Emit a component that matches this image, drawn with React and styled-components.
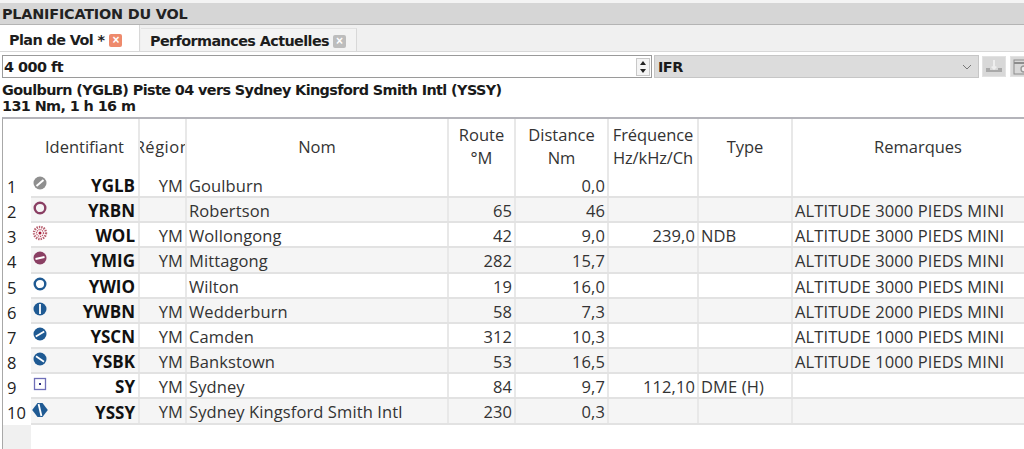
import React from 'react'
import styled, { createGlobalStyle } from 'styled-components'

const GlobalStyle = createGlobalStyle`
  html, body { margin: 0; padding: 0; background: #fff; overflow: hidden; }
  body { font-family: "Open Sans", "Noto Sans", sans-serif; color: #1a1a1a; }
`

const COLUMNS = '109px 47px 262px 67px 93px 90px 94px 252px'
const BLUE = '#1f5a93'
const PLUM = '#8a3f63'

const Page = styled.div`
  width: 1024px;
  height: 449px;
  overflow: hidden;
  display: flex;
  flex-direction: column;
  padding-top: 3px;
  box-sizing: border-box;
  background: #f4f4f4;
`
const TitleBar = styled.div`
  height: 20px;
  flex: none;
  box-sizing: content-box;
  background: #d6d6d6;
  border-bottom: 1px solid #b4b4b4;
  padding: 1px 0 0 2px;
  display: flex;
  align-items: center;
  font: bold 14.4px "DejaVu Sans", sans-serif;
  letter-spacing: -0.2px;
  color: #222;
  white-space: nowrap;
`
const TabBar = styled.div`
  height: 27px;
  flex: none;
  box-sizing: border-box;
  background: #f0f0f0;
  border-bottom: 1px solid #d8d8d8;
  display: flex;
  align-items: flex-end;
`
const Tab = styled.div`
  height: ${p => (p.$active ? '26px' : '23px')};
  box-sizing: border-box;
  background: ${p => (p.$active ? '#fff' : '#f3f3f3')};
  border-right: 1px solid #d8d8d8;
  border-top: ${p => (p.$active ? '0' : '1px solid #e2e2e2')};
  width: ${p => p.$width}px;
  margin-right: ${p => p.$gap || 0}px;
  padding-left: ${p => p.$pad}px;
  padding-top: ${p => (p.$active ? 4 : 2)}px;
  display: flex;
  align-items: center;
  gap: ${p => (p.$active ? 5 : 4)}px;
  font: bold 14.4px "DejaVu Sans", sans-serif;
  letter-spacing: -0.6px;
  color: #1d1d1d;
  white-space: nowrap;
`
const CloseBox = styled.span`
  width: 13px;
  height: 13px;
  border-radius: 2px;
  background: ${p => (p.$active ? '#ee8a6c' : '#bdbdbd')};
  color: #fff;
  font: bold 12px/13px "Liberation Sans", sans-serif;
  text-align: center;
  letter-spacing: 0;
`
const Body = styled.div`
  flex: 1;
  min-height: 0;
  display: flex;
  flex-direction: column;
  background: #fff;
`
const InputRow = styled.div`
  height: 23px;
  flex: none;
  margin-top: 3px;
  display: flex;
  align-items: stretch;
  padding-left: 2px;
`
const AltitudeBox = styled.div`
  width: 650px;
  flex: none;
  box-sizing: border-box;
  border: 1px solid #9a9a9a;
  background: #fff;
  display: flex;
  align-items: center;
  justify-content: space-between;
  padding: 1px 0 0 1px;
  font: bold 14.4px "DejaVu Sans", sans-serif;
  letter-spacing: -0.5px;
`
const Spinner = styled.div`
  width: 14px;
  height: 18px;
  margin: -1px 1px 0 0;
  box-sizing: border-box;
  border: 1px solid #c8c8c8;
  display: flex;
  flex-direction: column;
  align-items: center;
  justify-content: space-around;
  background: #f4f4f4;
`
const Arrow = styled.span`
  width: 0;
  height: 0;
  border-left: 3px solid transparent;
  border-right: 3px solid transparent;
  border-${p => (p.$up ? 'bottom' : 'top')}: 4px solid #222;
`
const RuleSelect = styled.div`
  width: 325px;
  flex: none;
  margin-left: 2px;
  box-sizing: border-box;
  background: #dcdcdc;
  border: 1px solid #c6c6c6;
  display: flex;
  align-items: center;
  justify-content: space-between;
  padding: 1px 6px 0 3px;
  font: bold 14.4px "DejaVu Sans", sans-serif;
  letter-spacing: -0.5px;
`
const ToolButton = styled.div`
  width: 24px;
  height: 21px;
  flex: none;
  margin-left: ${p => p.$gap || 0}px;
  align-self: center;
  background: #d8d8d8;
  border: 1px solid #e2e2e2;
  box-sizing: border-box;
  display: flex;
  align-items: center;
  justify-content: center;
`
const Summary = styled.div`
  flex: none;
  height: 35px;
  padding: 4px 0 0 2px;
  font: bold 14.4px/16px "DejaVu Sans", sans-serif;
  letter-spacing: -0.6px;
  color: #1a1a1a;
  white-space: nowrap;
`
const TableFrame = styled.div`
  flex: 1;
  min-height: 0;
  margin-left: 2px;
  border-top: 2px solid #b4b4ba;
  border-left: 1px solid #a8a8a8;
  display: flex;
`
const RowHeaders = styled.div`
  width: 28px;
  flex: none;
  background: #f0f0f0;
  display: flex;
  flex-direction: column;
`
const HeaderCorner = styled.div`
  height: 53.8px;
  background: #fff;
`
const RowNumber = styled.div`
  height: 25.2px;
  padding-left: 4px;
  background: #fff;
  font-size: 16.5px;
  line-height: 27px;
  color: #222;
  box-sizing: border-box;
`
const Table = styled.div`
  flex: 1;
  min-width: 0;
  display: flex;
  flex-direction: column;
`
const HeadRow = styled.div`
  display: grid;
  grid-template-columns: ${COLUMNS};
  height: 53.8px;
`
const HeadCell = styled.div`
  border-right: 2px solid #e8e8e8;
  box-sizing: border-box;
  overflow: hidden;
  display: flex;
  justify-content: center;
  white-space: nowrap;
  font-size: 16.5px;
  line-height: 22.5px;
  color: #333;
  padding-top: ${p => (p.$pad ? 5 : 17)}px;
  text-align: center;
`
const HeadText = styled.div`
  flex: none;
  letter-spacing: ${p => p.$spacing || 0}px;
`
const Row = styled.div`
  display: grid;
  grid-template-columns: ${COLUMNS};
  height: 25.2px;
  box-sizing: border-box;
  background: ${p => (p.$odd ? '#f5f5f5' : '#fff')};
  border-bottom: 2px solid #e2e2e2;
`
const Cell = styled.div`
  border-right: 2px solid #e8e8e8;
  box-sizing: border-box;
  padding: 0 2px;
  overflow: hidden;
  white-space: nowrap;
  font-size: 16.5px;
  letter-spacing: 0.1px;
  line-height: 26px;
  color: #333;
  text-align: ${p => (p.$right ? 'right' : 'left')};
`
const IdentCell = styled(Cell)`
  display: flex;
  align-items: center;
  justify-content: space-between;
  padding: 2px 3px 0 1px;
  font: bold 17px "Open Sans", sans-serif;
  letter-spacing: 0;
  color: #111;
`
const IconSlot = styled.span`
  width: 16px;
  height: 16px;
  display: flex;
  margin-top: -5px;
`

function WaypointIcon({ kind }) {
  const shapes = {
    grey: (
      <>
        <circle cx="8" cy="8" r="6.5" fill="#8f8f8f" />
        <line x1="4.5" y1="11" x2="11.5" y2="5" stroke="#fff" strokeWidth="2" />
      </>
    ),
    plumRing: <circle cx="8" cy="8" r="5.3" fill="none" stroke={PLUM} strokeWidth="2.4" />,
    ndb: (
      <>
        <circle cx="8" cy="8" r="6" fill="none" stroke="#b8606f" strokeWidth="2.4" strokeDasharray="1.4 1" />
        <circle cx="8" cy="8" r="3.4" fill="none" stroke="#b84a5e" strokeWidth="1.1" strokeDasharray="1.2 0.8" />
        <circle cx="8" cy="8" r="1.5" fill="#a81c38" />
      </>
    ),
    plumBar: (
      <>
        <circle cx="8" cy="8" r="6.5" fill={PLUM} />
        <line x1="3.5" y1="9" x2="12.5" y2="7" stroke="#fff" strokeWidth="1.8" />
      </>
    ),
    blueRing: <circle cx="8" cy="8" r="5.3" fill="none" stroke={BLUE} strokeWidth="2.4" />,
    blueVert: (
      <>
        <circle cx="8" cy="8" r="6.5" fill={BLUE} />
        <line x1="8" y1="3" x2="8" y2="13" stroke="#fff" strokeWidth="1.8" />
      </>
    ),
    blueUp: (
      <>
        <circle cx="8" cy="8" r="6.5" fill={BLUE} />
        <line x1="3.8" y1="10.6" x2="12.2" y2="5.4" stroke="#fff" strokeWidth="1.8" />
      </>
    ),
    blueDown: (
      <>
        <circle cx="8" cy="8" r="6.5" fill={BLUE} />
        <line x1="4" y1="5.2" x2="12" y2="10.8" stroke="#fff" strokeWidth="1.8" />
      </>
    ),
    dme: (
      <>
        <rect x="2.5" y="2.5" width="11" height="11" fill="#fff" stroke="#6f6fb8" strokeWidth="1.3" />
        <rect x="7" y="7" width="2" height="2" fill="#2e2e80" />
      </>
    ),
    blueDiamond: (
      <>
        <path d="M5.5 1h5L15.8 8l-5.3 7h-5L.2 8z" fill={BLUE} />
        <line x1="6.6" y1="2" x2="9.4" y2="14" stroke="#fff" strokeWidth="1.8" />
      </>
    ),
  }
  return (
    <svg width="16" height="16" viewBox="0 0 16 16">
      {shapes[kind]}
    </svg>
  )
}

const ALT3 = 'ALTITUDE 3000 PIEDS MINI'
const ALT2 = 'ALTITUDE 2000 PIEDS MINI'
const ALT1 = 'ALTITUDE 1000 PIEDS MINI'

const rows = [
  { icon: 'grey', id: 'YGLB', region: 'YM', name: 'Goulburn', route: '', dist: '0,0', freq: '', type: '', note: '' },
  { icon: 'plumRing', id: 'YRBN', region: '', name: 'Robertson', route: '65', dist: '46', freq: '', type: '', note: ALT3 },
  { icon: 'ndb', id: 'WOL', region: 'YM', name: 'Wollongong', route: '42', dist: '9,0', freq: '239,0', type: 'NDB', note: ALT3 },
  { icon: 'plumBar', id: 'YMIG', region: 'YM', name: 'Mittagong', route: '282', dist: '15,7', freq: '', type: '', note: ALT3 },
  { icon: 'blueRing', id: 'YWIO', region: '', name: 'Wilton', route: '19', dist: '16,0', freq: '', type: '', note: ALT3 },
  { icon: 'blueVert', id: 'YWBN', region: 'YM', name: 'Wedderburn', route: '58', dist: '7,3', freq: '', type: '', note: ALT2 },
  { icon: 'blueUp', id: 'YSCN', region: 'YM', name: 'Camden', route: '312', dist: '10,3', freq: '', type: '', note: ALT1 },
  { icon: 'blueDown', id: 'YSBK', region: 'YM', name: 'Bankstown', route: '53', dist: '16,5', freq: '', type: '', note: ALT1 },
  { icon: 'dme', id: 'SY', region: 'YM', name: 'Sydney', route: '84', dist: '9,7', freq: '112,10', type: 'DME (H)', note: '' },
  { icon: 'blueDiamond', id: 'YSSY', region: 'YM', name: 'Sydney Kingsford Smith Intl', route: '230', dist: '0,3', freq: '', type: '', note: '' },
]

const heads = [
  { lines: ['Identifiant'] },
  { lines: ['Région'], spacing: 0.5 },
  { lines: ['Nom'] },
  { lines: ['Route', '°M'] },
  { lines: ['Distance', 'Nm'] },
  { lines: ['Fréquence', 'Hz/kHz/Ch'], spacing: -0.1 },
  { lines: ['Type'] },
  { lines: ['Remarques'] },
]

export default function App() {
  return (
    <Page>
      <GlobalStyle />
      <TitleBar>PLANIFICATION DU VOL</TitleBar>
      <TabBar>
        <Tab $active $width={140} $gap={1} $pad={9}>
          Plan de Vol * <CloseBox $active>×</CloseBox>
        </Tab>
        <Tab $width={216} $pad={9}>
          Performances Actuelles <CloseBox>×</CloseBox>
        </Tab>
      </TabBar>
      <Body>
        <InputRow>
          <AltitudeBox>
            4 000 ft
            <Spinner>
              <Arrow $up />
              <Arrow />
            </Spinner>
          </AltitudeBox>
          <RuleSelect>
            IFR
            <svg width="10" height="6" viewBox="0 0 10 6">
              <path d="M1 1l4 4 4-4" fill="none" stroke="#777" strokeWidth="1" />
            </svg>
          </RuleSelect>
          <ToolButton $gap={3}>
            <svg width="18" height="15" viewBox="0 0 18 15">
              <path d="M1 13h16v-4h-4v2H5V9H1z" fill="#a9a9a9" />
              <path d="M8 1h2v6l2 1-3 3-3-3 2-1z" fill="#eeeeee" />
            </svg>
          </ToolButton>
          <ToolButton $gap={4}>
            <svg width="18" height="16" viewBox="0 0 18 16">
              <rect x="1" y="1" width="16" height="14" fill="none" stroke="#8c8c8c" />
              <path d="M1 4h16" stroke="#8c8c8c" strokeWidth="2" />
              <circle cx="11" cy="10" r="3" fill="#eeeeee" stroke="#9a9a9a" strokeWidth="1.4" />
            </svg>
          </ToolButton>
        </InputRow>
        <Summary>
          Goulburn (YGLB) Piste 04 vers Sydney Kingsford Smith Intl (YSSY)
          <br />
          131 Nm, 1 h 16 m
        </Summary>
        <TableFrame>
          <RowHeaders>
            <HeaderCorner />
            {rows.map((r, i) => (
              <RowNumber key={r.id}>{i + 1}</RowNumber>
            ))}
          </RowHeaders>
          <Table>
            <HeadRow>
              {heads.map(h => (
                <HeadCell key={h.lines[0]} $pad={h.lines.length > 1}>
                  <HeadText $spacing={h.spacing}>
                    {h.lines.map(l => (
                      <div key={l}>{l}</div>
                    ))}
                  </HeadText>
                </HeadCell>
              ))}
            </HeadRow>
            {rows.map((r, i) => (
              <Row key={r.id} $odd={i % 2 === 1}>
                <IdentCell>
                  <IconSlot>
                    <WaypointIcon kind={r.icon} />
                  </IconSlot>
                  {r.id}
                </IdentCell>
                <Cell $right>{r.region}</Cell>
                <Cell>{r.name}</Cell>
                <Cell $right>{r.route}</Cell>
                <Cell $right>{r.dist}</Cell>
                <Cell $right>{r.freq}</Cell>
                <Cell>{r.type}</Cell>
                <Cell>{r.note}</Cell>
              </Row>
            ))}
          </Table>
        </TableFrame>
      </Body>
    </Page>
  )
}
